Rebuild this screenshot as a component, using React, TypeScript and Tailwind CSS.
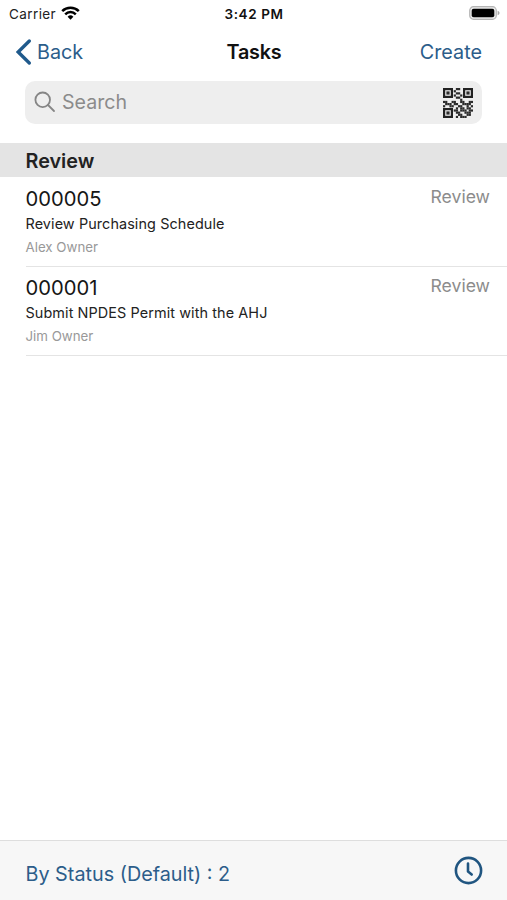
interface Task {
  id: string;
  title: string;
  owner: string;
  status: string;
}

const tasks: Task[] = [
  { id: '000005', title: 'Review Purchasing Schedule', owner: 'Alex Owner', status: 'Review' },
  { id: '000001', title: 'Submit NPDES Permit with the AHJ', owner: 'Jim Owner', status: 'Review' },
];

// data modules only, the three finder squares are drawn separately
const qrRows = [
  '00000011000000',
  '00000100000000',
  '00000011000000',
  '00000100100000',
  '00000011000000',
  '00000000100000',
  '11001100110011',
  '01110110011110',
  '10011001100101',
  '00000010110110',
  '00000110111011',
  '00000011001110',
  '00000001100110',
  '00000010111000',
];

const finders = [
  [0, 0],
  [20, 0],
  [0, 20],
];

function QrIcon() {
  return (
    <svg className="w-[30px] h-[30px]" viewBox="0 0 30 30" fill="#2b2b2b">
      {finders.map(([x, y]) => (
        <g key={`${x}-${y}`}>
          <rect x={x + 1.1} y={y + 1.1} width="7.8" height="7.8" fill="none" stroke="#222222" strokeWidth="2.2" />
          <rect x={x + 3.4} y={y + 3.4} width="3.2" height="3.2" />
        </g>
      ))}
      {qrRows.map((row, y) =>
        row.split('').map((cell, x) =>
          cell === '1' ? (
            <rect key={`${x}-${y}`} x={x * 2.143} y={y * 2.143} width="2.2" height="2.2" />
          ) : null
        )
      )}
    </svg>
  );
}

function StatusBar() {
  return (
    <div className="grid grid-cols-3 items-center h-7 px-2 text-[13.5px] leading-7">
      <div className="flex items-center gap-[5px] pl-px">
        <span className="text-[#222222] tracking-[0.4px]">Carrier</span>
        <svg className="w-[19px] h-[14px] -mt-[2px]" viewBox="0 0 19 14" fill="none" stroke="#000000" strokeWidth="2.5">
          <path d="M1.2 5.1a11.8 11.8 0 0 1 16.6 0" />
          <path d="M4.2 8.3a7.5 7.5 0 0 1 10.6 0" />
          <path d="M9.5 13.7 6.6 10.8a4.1 4.1 0 0 1 5.8 0z" fill="#000000" stroke="none" />
        </svg>
      </div>
      <span className="pl-px text-center font-semibold text-[#111111] tracking-[0.6px]">3:42 PM</span>
      <svg className="w-[31px] h-[14px] -mt-[2px] -mr-px justify-self-end" viewBox="0 0 31 14">
        <rect x="0.7" y="0.7" width="26.6" height="12.6" rx="3.8" fill="#e8e8e8" stroke="#b5b5b5" strokeWidth="1.2" />
        <rect x="2.7" y="2.7" width="22.6" height="8.6" rx="2" fill="#000000" />
        <path d="M28.6 4.8c1.4.6 1.9 1.3 1.9 2.2s-.5 1.6-1.9 2.2z" fill="#a8a8a8" />
      </svg>
    </div>
  );
}

function TaskRow({ task }: { task: Task }) {
  return (
    <li className="ml-[25.5px] h-[89px] pr-[17px] border-b border-[#e4e4e4] flex justify-between">
      <div className="pt-[7px]">
        <div className="text-[20.2px] leading-[27px] text-[#161616]">{task.id}</div>
        <div className="text-[14.4px] leading-[24px] text-[#222222] tracking-[0.1px]">{task.title}</div>
        <div className="text-[13.3px] leading-[23px] text-[#999999]">{task.owner}</div>
      </div>
      <div className="pt-[6px] text-[17.6px] leading-[26px] text-[#8c8c8c]">{task.status}</div>
    </li>
  );
}

export default function App() {
  return (
    <div className="w-[507px] h-[900px] flex flex-col overflow-hidden bg-white font-['Inter','Liberation_Sans',sans-serif]">
      <StatusBar />

      <header className="grid grid-cols-3 items-center h-[48px] px-4 text-[19.8px] text-[#2c5d8a]">
        <button className="flex items-center gap-[6px]">
          <svg className="w-[15px] h-[26px]" viewBox="0 0 15 26" fill="none" stroke="#205a8c" strokeWidth="3.3" strokeLinecap="round">
            <path d="M13.3 2 2.2 13l11.1 11" />
          </svg>
          <span className="pt-[2px]">Back</span>
        </button>
        <h1 className="pt-[2px] pl-px text-center font-semibold text-[#111111] tracking-[-0.2px]">Tasks</h1>
        <button className="pt-[2px] text-right pr-[9px]">Create</button>
      </header>

      <div className="flex items-center mt-[5px] mx-[25px] h-[43px] px-[9px] rounded-[10px] bg-[#eeeeee]">
        <svg className="w-[22px] h-[22px] -mt-px" viewBox="0 0 22 22" fill="none" stroke="#858585" strokeWidth="1.8" strokeLinecap="round">
          <circle cx="8.7" cy="8.8" r="7.3" />
          <path d="m14 14 6 6" />
        </svg>
        <span className="ml-[6px] flex-1 text-[19.6px] text-[#8b8b8b]">Search</span>
        <QrIcon />
      </div>

      <h2 className="mt-[19px] h-[34px] pl-[25.5px] bg-[#e4e4e4] text-[19.8px] leading-[36px] font-semibold text-[#222222]">
        Review
      </h2>

      <ul className="pt-px">
        {tasks.map(task => (
          <TaskRow key={task.id} task={task} />
        ))}
      </ul>

      <footer className="mt-auto h-[60px] flex items-center justify-between border-t border-[#dedede] bg-[#f7f7f7] pl-[25.5px] pr-[24px] text-[#2c5d8a]">
        <span className="pt-[8px] text-[19.8px]">By Status (Default) : 2</span>
        <svg className="w-[29px] h-[29px]" viewBox="0 0 29 29" fill="none" stroke="#205580" strokeWidth="2.6" strokeLinecap="round" strokeLinejoin="round">
          <circle cx="14.5" cy="14.5" r="12.6" />
          <path d="M14 7.5v8l3.7 3" />
        </svg>
      </footer>
    </div>
  );
}
